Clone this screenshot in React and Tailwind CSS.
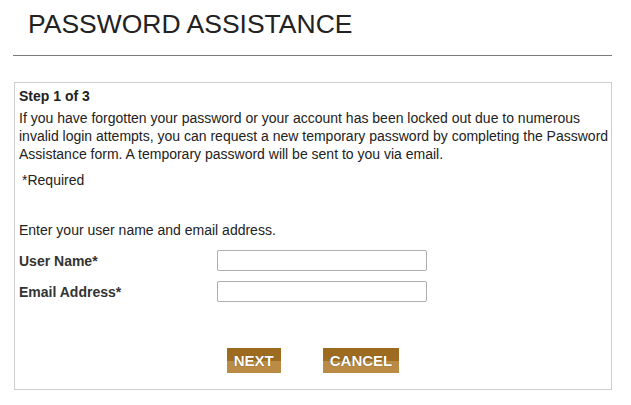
import React from 'react';

const font = { fontFamily: '"Liberation Sans", Arial, Helvetica, sans-serif' };

function Field({ label }) {
    return (
        <div className="flex items-center h-[21px]">
            <label className="w-[198px] font-bold text-[#333]">{label}</label>
            <input type="text" className="w-[210px] h-[21px] border border-[#adadad] rounded-[2px] bg-white outline-none" />
        </div>
    );
}

function GoldButton({ children }) {
    return (
        <button className="h-[25px] px-[7px] text-[15px] leading-[25px] font-bold text-white bg-[linear-gradient(to_bottom,#9b6a1e_0%,#9e6d22_50%,#b98b45_50%,#b98b45_100%)] [text-shadow:0_0_1px_#5a3b08]">
            {children}
        </button>
    );
}

export default function App() {
    return (
        <div className="w-[631px] h-[405px] bg-white text-[#222]" style={font}>
            {/* encabezado */}
            <div className="ml-[13px] w-[599px] pt-[8px] pb-[15px] border-b border-[#7a7a7a]">
                <h1 className="pl-[15px] text-[26.5px] leading-[32px] text-[#222]">PASSWORD ASSISTANCE</h1>
            </div>

            <div className="ml-[14px] mt-[26px] w-[598px] h-[308px] border border-[#cfcfcf] pt-[4px] pl-[4px] text-[14px] leading-[18px]">
                <p className="font-bold">Step 1 of 3</p>
                <p className="mt-[4px] whitespace-nowrap">
                    If you have forgotten your password or your account has been locked out due to numerous<br />
                    invalid login attempts, you can request a new temporary password by completing the Password<br />
                    Assistance form. A temporary password will be sent to you via email.
                </p>
                <p className="mt-[8px] pl-[3px]">*Required</p>
                <p className="mt-[32px]">Enter your user name and email address.</p>

                <div className="mt-[11px] flex flex-col gap-[10px]">
                    <Field label="User Name*" />
                    <Field label="Email Address*" />
                </div>

                <div className="mt-[46px] flex justify-center gap-[42px] pr-[4px]">
                    <GoldButton>NEXT</GoldButton>
                    <GoldButton>CANCEL</GoldButton>
                </div>
            </div>
        </div>
    );
}
